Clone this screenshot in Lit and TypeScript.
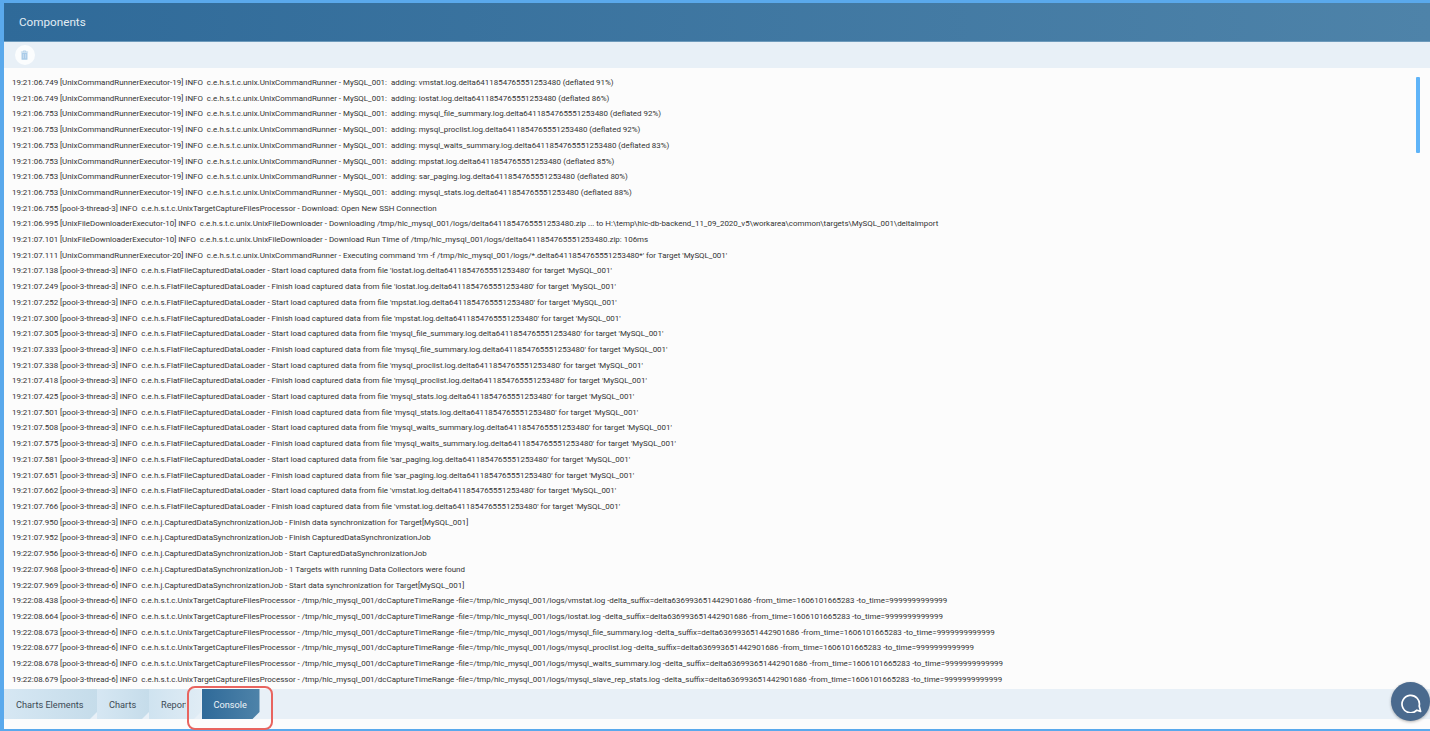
import { LitElement, html, css } from "lit";
import { customElement } from "lit/decorators.js";

const R = "[UnixCommandRunnerExecutor-19] INFO  c.e.h.s.t.c.unix.UnixCommandRunner - MySQL_001:  adding: ";
const F = "[pool-3-thread-3] INFO  c.e.h.s.FlatFileCapturedDataLoader - ";
const D = "delta6411854765551253480";
const J = "c.e.h.j.CapturedDataSynchronizationJob - ";
const P = "[pool-3-thread-6] INFO  c.e.h.s.t.c.UnixTargetCaptureFilesProcessor - /tmp/hlc_mysql_001/dcCaptureTimeRange -file=/tmp/hlc_mysql_001/logs/";
const S = " -delta_suffix=delta636993651442901686 -from_time=1606101665283 -to_time=9999999999999";

const lines: string[] = [
  `19:21:06.749 ${R}vmstat.log.${D} (deflated 91%)`,
  `19:21:06.749 ${R}iostat.log.${D} (deflated 86%)`,
  `19:21:06.753 ${R}mysql_file_summary.log.${D} (deflated 92%)`,
  `19:21:06.753 ${R}mysql_proclist.log.${D} (deflated 92%)`,
  `19:21:06.753 ${R}mysql_waits_summary.log.${D} (deflated 83%)`,
  `19:21:06.753 ${R}mpstat.log.${D} (deflated 85%)`,
  `19:21:06.753 ${R}sar_paging.log.${D} (deflated 80%)`,
  `19:21:06.753 ${R}mysql_stats.log.${D} (deflated 88%)`,
  `19:21:06.755 [pool-3-thread-3] INFO  c.e.h.s.t.c.UnixTargetCaptureFilesProcessor - Download: Open New SSH Connection`,
  `19:21:06.995 [UnixFileDownloaderExecutor-10] INFO  c.e.h.s.t.c.unix.UnixFileDownloader - Downloading /tmp/hlc_mysql_001/logs/${D}.zip ... to H:\\temp\\hlc-db-backend_11_09_2020_v5\\workarea\\common\\targets\\MySQL_001\\deltaImport`,
  `19:21:07.101 [UnixFileDownloaderExecutor-10] INFO  c.e.h.s.t.c.unix.UnixFileDownloader - Download Run Time of /tmp/hlc_mysql_001/logs/${D}.zip: 106ms`,
  `19:21:07.111 [UnixCommandRunnerExecutor-20] INFO  c.e.h.s.t.c.unix.UnixCommandRunner - Executing command 'rm -f /tmp/hlc_mysql_001/logs/*.${D}*' for Target 'MySQL_001'`,
  ...([
    ["07.138", "Start", "iostat"],
    ["07.249", "Finish", "iostat"],
    ["07.252", "Start", "mpstat"],
    ["07.300", "Finish", "mpstat"],
    ["07.305", "Start", "mysql_file_summary"],
    ["07.333", "Finish", "mysql_file_summary"],
    ["07.338", "Start", "mysql_proclist"],
    ["07.418", "Finish", "mysql_proclist"],
    ["07.425", "Start", "mysql_stats"],
    ["07.501", "Finish", "mysql_stats"],
    ["07.508", "Start", "mysql_waits_summary"],
    ["07.575", "Finish", "mysql_waits_summary"],
    ["07.581", "Start", "sar_paging"],
    ["07.651", "Finish", "sar_paging"],
    ["07.662", "Start", "vmstat"],
    ["07.766", "Finish", "vmstat"],
  ].map(([t, v, n]) => `19:21:${t} ${F}${v} load captured data from file '${n}.log.${D}' for target 'MySQL_001'`)),
  `19:21:07.950 [pool-3-thread-3] INFO  ${J}Finish data synchronization for Target[MySQL_001]`,
  `19:21:07.952 [pool-3-thread-3] INFO  ${J}Finish CapturedDataSynchronizationJob`,
  `19:22:07.956 [pool-3-thread-6] INFO  ${J}Start CapturedDataSynchronizationJob`,
  `19:22:07.968 [pool-3-thread-6] INFO  ${J}1 Targets with running Data Collectors were found`,
  `19:22:07.969 [pool-3-thread-6] INFO  ${J}Start data synchronization for Target[MySQL_001]`,
  `19:22:08.438 ${P}vmstat.log${S}`,
  `19:22:08.664 ${P}iostat.log${S}`,
  `19:22:08.673 ${P}mysql_file_summary.log${S}`,
  `19:22:08.677 ${P}mysql_proclist.log${S}`,
  `19:22:08.678 ${P}mysql_waits_summary.log${S}`,
  `19:22:08.679 ${P}mysql_slave_rep_stats.log${S}`,
];

@customElement("app-root")
export class AppRoot extends LitElement {
  static styles = css`
    :host {
      display: block;
      height: 731px;
      box-sizing: border-box;
      background: #fcfcfc;
      border-style: solid;
      border-color: #5aa9ec;
      border-width: 3px 0 2px 4px;
      font-family: Roboto, "Liberation Sans", sans-serif;
    }
    .frame {
      position: relative;
      height: 100%;
      display: flex;
      flex-direction: column;
    }
    .header {
      flex: 0 0 38.5px;
      box-sizing: border-box;
      padding-left: 15px;
      display: flex;
      align-items: center;
      color: #e3edf4;
      font-size: 11.7px;
      background: linear-gradient(90deg, #2f6a99 0%, #4e83a9 100%);
      border-bottom: 1px solid #6d9abb;
    }
    .toolbar {
      flex: 0 0 26.5px;
      box-sizing: border-box;
      padding-left: 10.5px;
      display: flex;
      align-items: center;
      background: #e8f0f7;
    }
    .trash {
      width: 20px;
      height: 20px;
      border-radius: 50%;
      background: #fbfdfe;
      display: flex;
      align-items: center;
      justify-content: center;
    }
    .trash svg { width: 9px; height: 10px; display: block; }
    .log {
      flex: 1;
      min-height: 0;
      box-sizing: border-box;
      padding: 7px 0 0 8px;
      overflow: hidden;
      position: relative;
      background: #fcfcfc;
    }
    .line {
      height: 15.71px;
      line-height: 15.71px;
      font-size: 7.94px;
      color: #333;
      white-space: pre;
    }
    .scroll {
      position: absolute;
      top: 9px;
      right: 10px;
      width: 4px;
      height: 76px;
      background: #5fb4f8;
      border-radius: 1px;
    }
    .tabs {
      flex: 0 0 30px;
      display: flex;
      background: #e8f0f7;
    }
    .tab {
      height: 30px;
      box-sizing: border-box;
      padding-left: 12px;
      display: flex;
      align-items: center;
      font-size: 9.2px;
      color: #3c4a55;
      white-space: pre;
      background: linear-gradient(90deg, #d6e7f3, #c5dcea);
      clip-path: polygon(0 0, 100% 0, 100% calc(100% - 7px), calc(100% - 7px) 100%, 0 100%);
    }
    .tab.a { width: 93px; }
    .tab.b { width: 52px; }
    .tab.c {
      width: 52px;
      margin-right: 0.5px;
      background: linear-gradient(90deg, #cfe3f0, #e0ecf5);
    }
    .clip {
      display: block;
      width: 25px;
      overflow: hidden;
    }
    .tab.on {
      width: 58px;
      color: #eef4f8;
      background: linear-gradient(90deg, #2f6a99, #4e83a9);
    }
    .foot {
      flex: 0 0 10px;
      background: #fcfcfc;
    }
    .mark {
      position: absolute;
      left: 183px;
      top: 683px;
      width: 86px;
      height: 44px;
      box-sizing: border-box;
      border: 2px solid #e8645f;
      border-radius: 8px;
      pointer-events: none;
    }
    .chat {
      position: absolute;
      right: 0;
      bottom: 8px;
      width: 39px;
      height: 39px;
      border-radius: 50%;
      background: #4a6a8e;
      box-shadow: 0 1px 3px rgba(0, 0, 0, 0.3);
      display: flex;
      align-items: center;
      justify-content: center;
    }
    .chat svg { width: 22px; height: 22px; display: block; }
  `;

  render() {
    return html`
      <div class="frame">
        <div class="header">Components</div>
        <div class="toolbar">
          <div class="trash">
            <svg viewBox="0 0 10 11">
              <path d="M1 2.2h8M3.6 2V1h2.8v1" fill="none" stroke="#a9cbe8" stroke-width="0.9"/>
              <path d="M1.7 3h6.6v7.2a.6.6 0 0 1-.6.6H2.3a.6.6 0 0 1-.6-.6z" fill="#a9cbe8"/>
              <path d="M3.7 4.4v4.8M6.3 4.4v4.8" stroke="#e8f0f7" stroke-width="0.6"/>
            </svg>
          </div>
        </div>
        <div class="log">
          ${lines.map((l) => html`<div class="line">${l}</div>`)}
          <div class="scroll"></div>
        </div>
        <div class="tabs">
          <div class="tab a">Charts Elements</div>
          <div class="tab b">Charts</div>
          <div class="tab c"><span class="clip">Report</span></div>
          <div class="tab on">Console</div>
        </div>
        <div class="foot"></div>
        <div class="mark"></div>
        <div class="chat">
          <svg viewBox="0 0 22 22">
            <path d="M20.6 20.4l-3.7-1.2A8.7 8.7 0 1 1 19.2 15z" fill="none" stroke="#fff" stroke-width="1.7" stroke-linejoin="round"/>
          </svg>
        </div>
      </div>
    `;
  }
}
